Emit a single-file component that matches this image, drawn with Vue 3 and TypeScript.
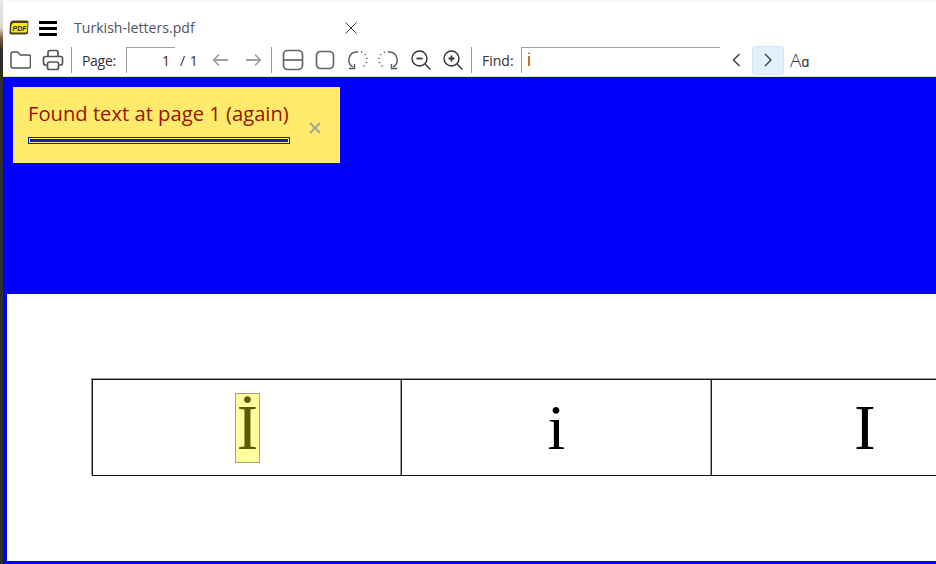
<script setup lang="ts">
const cells = [
  { letter: 'İ', found: true },
  { letter: 'i', found: false },
  { letter: 'I', found: false },
]
</script>

<template>
  <div class="window">
    <div class="edge"></div>
    <div class="app">
      <div class="tabbar">
        <svg class="logo" width="20" height="15" viewBox="0 0 20 15">
          <path d="M3.5 0.5 H18 a1.5 1.5 0 0 1 1.5 1.5 L19 12 a2 2 0 0 1-2 2.5 H2.5 a2 2 0 0 1-2-2.5 L1 3.5 a3.5 3.5 0 0 1 2.5-3 z" fill="#4a4020" />
          <path d="M4.5 3 H18.5 L18 11 a1.5 1.5 0 0 1-1.5 1.5 H3.5 a1.5 1.5 0 0 1-1.5-1.5 L2.5 5 a2.5 2.5 0 0 1 2-2 z" fill="#f8ec00" />
          <text x="10.5" y="10.6" class="logo-text">PDF</text>
        </svg>
        <div class="burger"><span></span><span></span><span></span></div>
        <div class="tab-title">Turkish-letters.pdf</div>
        <svg class="tab-close" width="12" height="12" viewBox="0 0 12 12">
          <path d="M0.5 0.5 L11.5 11.5 M11.5 0.5 L0.5 11.5" stroke="#333" stroke-width="1" fill="none" />
        </svg>
      </div>

      <div class="toolbar">
        <button class="tool">
          <svg width="22" height="22" viewBox="0 0 22 22" fill="none" stroke="#555" stroke-width="1.5">
            <path d="M2 5 a2 2 0 0 1 2-2 h4.5 l3 3 h8 a2 2 0 0 1 2 2 v9 a2 2 0 0 1-2 2 h-15.5 a2 2 0 0 1-2-2 z" />
          </svg>
        </button>
        <button class="tool print">
          <svg width="22" height="22" viewBox="0 0 22 22" fill="none" stroke="#555" stroke-width="1.7">
            <path d="M6 7.5 v-4 a2 2 0 0 1 2-2 h6 a2 2 0 0 1 2 2 v4" />
            <path d="M5.5 16 h-2 a2 2 0 0 1-2-2 v-4.5 a2 2 0 0 1 2-2 h15 a2 2 0 0 1 2 2 v4.5 a2 2 0 0 1-2 2 h-2" />
            <rect x="5.5" y="13" width="11" height="7.5" rx="2" />
          </svg>
        </button>
        <div class="sep sep-file"></div>
        <span class="label page-label">Page:</span>
        <div class="field page-field">1</div>
        <span class="label of">/ 1</span>
        <button class="tool">
          <svg width="20" height="20" viewBox="0 0 20 20" fill="none" stroke="#a0a0a0" stroke-width="1.8">
            <path d="M17 10 H2.8 M8 4.5 L2.8 10 L8 15.5" />
          </svg>
        </button>
        <button class="tool">
          <svg width="20" height="20" viewBox="0 0 20 20" fill="none" stroke="#a0a0a0" stroke-width="1.8">
            <path d="M3 10 H17.2 M12 4.5 L17.2 10 L12 15.5" />
          </svg>
        </button>
        <div class="sep sep-view"></div>
        <button class="tool first-view">
          <svg width="22" height="22" viewBox="0 0 22 22" fill="none" stroke="#666" stroke-width="1.7">
            <rect x="1.5" y="1.5" width="19" height="19" rx="4" />
            <path d="M1.5 11 H20.5" />
          </svg>
        </button>
        <button class="tool">
          <svg width="22" height="22" viewBox="0 0 22 22" fill="none" stroke="#666" stroke-width="1.7">
            <rect x="2.5" y="2.5" width="17" height="17" rx="4" />
          </svg>
        </button>
        <button class="tool">
          <svg width="22" height="22" viewBox="0 0 22 22" fill="none" stroke="#555" stroke-width="1.4">
            <path d="M7 18 A8 8 0 0 1 11 3" />
            <path d="M11 3 A8 8 0 0 1 15 18.5" stroke="#555" stroke-dasharray="1.2 3" />
            <path d="M3 19.5 H8.5 V15" />
          </svg>
        </button>
        <button class="tool">
          <svg width="22" height="22" viewBox="0 0 22 22" fill="none" stroke="#555" stroke-width="1.4">
            <path d="M15 18 A8 8 0 0 0 11 3" />
            <path d="M11 3 A8 8 0 0 0 7 18.5" stroke="#555" stroke-dasharray="1.2 3" />
            <path d="M19 19.5 H13.5 V15" />
          </svg>
        </button>
        <button class="tool">
          <svg width="22" height="22" viewBox="0 0 22 22" fill="none" stroke="#333" stroke-width="1.4">
            <circle cx="9.5" cy="9.5" r="7.5" />
            <path d="M15 15 L20.5 20.5" />
            <path d="M6.5 9.5 H12.5" stroke-width="1.8" />
          </svg>
        </button>
        <button class="tool">
          <svg width="22" height="22" viewBox="0 0 22 22" fill="none" stroke="#333" stroke-width="1.4">
            <circle cx="9.5" cy="9.5" r="7.5" />
            <path d="M15 15 L20.5 20.5" />
            <path d="M6.5 9.5 H12.5 M9.5 6.5 V12.5" stroke-width="1.8" />
          </svg>
        </button>
        <div class="sep sep-find"></div>
        <span class="label find-label">Find:</span>
        <div class="field find-field">İ</div>
        <button class="tool">
          <svg width="12" height="14" viewBox="0 0 12 14" fill="none" stroke="#333" stroke-width="1.3">
            <path d="M9.5 1 L3.5 7 L9.5 13" />
          </svg>
        </button>
        <button class="tool active">
          <svg width="12" height="14" viewBox="0 0 12 14" fill="none" stroke="#333" stroke-width="1.3">
            <path d="M3 1 L9 7 L3 13" />
          </svg>
        </button>
        <span class="case">A<small>ɑ</small></span>
      </div>

      <div class="viewer">
        <div class="page">
          <div class="table">
            <div v-for="cell in cells" :key="cell.letter" class="cell">
              <span class="letter" :class="{ found: cell.found }">{{ cell.letter }}</span>
            </div>
          </div>
        </div>

        <div class="toast">
          <div class="toast-body">
            <div class="toast-msg">Found text at page 1 (again)</div>
            <div class="progress"></div>
          </div>
          <svg class="toast-x" width="12" height="12" viewBox="0 0 12 12">
            <path d="M1 1 L11 11 M11 1 L1 11" stroke="#a4a398" stroke-width="2" fill="none" />
          </svg>
        </div>
      </div>
    </div>
  </div>
</template>

<style>
html,
body {
  margin: 0;
  overflow: hidden;
}
</style>

<style scoped>
.window {
  display: flex;
  width: 936px;
  height: 564px;
  overflow: hidden;
  font-family: 'Open Sans', 'Liberation Sans', sans-serif;
  background: #fff;
}
.edge {
  width: 3px;
  flex-shrink: 0;
  background: linear-gradient(#e8e8e8 0, #d8d8d8 28px, #8a5a40 38px, #2e2e2a 50px, #2e2e2a 100%);
}
.app {
  flex: 1;
  display: flex;
  flex-direction: column;
  min-width: 0;
}
.tabbar {
  height: 44px;
  box-sizing: border-box;
  padding: 20px 0 0 6px;
  display: flex;
  align-items: flex-start;
  flex-shrink: 0;
  background: linear-gradient(#f7f7f7, #fff 3px);
}
.logo {
  display: block;
}
.logo-text {
  font-family: 'Liberation Sans', sans-serif;
  font-size: 7px;
  font-weight: 700;
  font-style: italic;
  text-anchor: middle;
  fill: #2a2a10;
}
.burger {
  width: 18px;
  margin: 1px 0 0 10px;
  display: flex;
  flex-direction: column;
  gap: 3px;
}
.burger span {
  height: 3px;
  background: #000;
}
.tab-title {
  margin: -2px 0 0 17px;
  width: 271px;
  font-size: 14.1px;
  line-height: 20px;
  color: #4b5563;
}
.tab-close {
  margin-top: 2px;
}
.toolbar {
  height: 32px;
  display: flex;
  align-items: center;
  padding-left: 1px;
  border-bottom: 1px solid #dcdcdc;
  flex-shrink: 0;
}
.tool {
  width: 32px;
  height: 29px;
  padding: 0;
  border: 0;
  background: none;
  display: flex;
  align-items: center;
  justify-content: center;
  flex-shrink: 0;
}
.print {
  margin-left: 1px;
}
.sep {
  width: 1px;
  height: 26px;
  background: #9a9a9a;
  flex-shrink: 0;
}
.sep-file {
  margin-left: 2px;
}
.sep-view {
  margin-left: 2px;
}
.sep-find {
  margin-left: 2px;
}
.first-view {
  margin-left: 5px;
}
.label {
  font-size: 14px;
  color: #333;
  flex-shrink: 0;
}
.page-label {
  margin-left: 10px;
  width: 44px;
  letter-spacing: -0.3px;
}
.field {
  box-sizing: border-box;
  height: 26px;
  border-top: 1px solid #a0a0a0;
  border-left: 1px solid #a0a0a0;
  font-size: 14px;
  line-height: 25px;
  color: #5a1800;
  flex-shrink: 0;
}
.page-field {
  width: 49px;
  text-align: right;
  padding-right: 5px;
}
.of {
  margin-left: 5px;
  width: 25px;
  word-spacing: 1px;
}
.find-label {
  margin-left: 10px;
  width: 39px;
}
.find-field {
  width: 199px;
  padding-left: 5px;
  color: #4a2a10;
}
.active {
  background: #e3f1fd;
  border: 1px solid #cfe6fa;
  border-radius: 3px;
  box-sizing: border-box;
}
.case {
  margin-left: 6px;
  font-size: 19px;
  font-weight: 300;
  color: #333;
  line-height: 1;
}
.case small {
  font-size: 14px;
}
.viewer {
  position: relative;
  flex: 1;
  min-height: 0;
  background: #0000ff;
  padding: 217px 0 3px 4px;
  box-sizing: border-box;
  display: flex;
}
.page {
  flex: 1;
  background: #fff;
  padding-top: 85px;
  padding-left: 85px;
  overflow: hidden;
  min-width: 0;
}
.table {
  display: flex;
  width: 1000px;
  height: 97px;
  box-sizing: border-box;
  border: 1px solid #111;
  box-shadow: -1px -1px 0 #999;
}
.cell {
  width: 310px;
  flex-shrink: 0;
  display: flex;
  align-items: center;
  justify-content: center;
  border-right: 1px solid #222;
  box-shadow: inset -1px 0 0 #999;
  font-family: 'Liberation Serif', serif;
  font-size: 64px;
  color: #000;
  box-sizing: border-box;
}
.cell:first-child {
  width: 309px;
}
.cell:last-child {
  width: 307px;
}
.letter {
  line-height: 70px;
}
.letter.found {
  height: 68px;
  line-height: 68px;
  padding: 0 0.5px;
  margin: 1px 0 0 1px;
  background: #ffffa0;
  outline: 1px solid #a3a37a;
  color: #5f5a00;
}
.toast {
  position: absolute;
  left: 10px;
  top: 10px;
  width: 327px;
  height: 76px;
  box-sizing: border-box;
  background: #ffeb6b;
  padding: 13px 0 0 15px;
  display: flex;
}
.toast-body {
  width: 262px;
  flex-shrink: 0;
}
.toast-msg {
  font-size: 20.2px;
  line-height: 26px;
  color: #9a1200;
  white-space: nowrap;
}
.progress {
  margin-top: 11px;
  width: 262px;
  height: 7px;
  box-sizing: border-box;
  background: #002b96;
  border: 1px solid #002b96;
  box-shadow: inset 0 0 0 1px #ffeb6b;
}
.toast-x {
  margin: 22px 0 0 19px;
}
</style>
